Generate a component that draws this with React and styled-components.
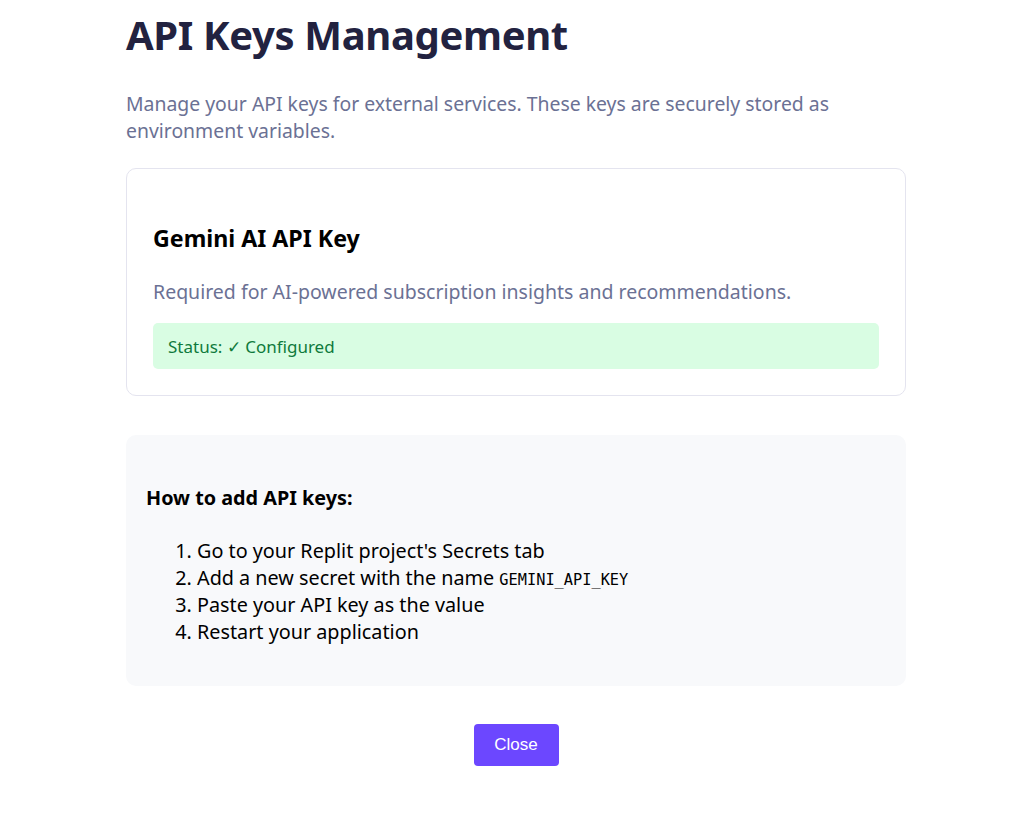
import React from 'react';
import styled, { createGlobalStyle } from 'styled-components';

const GlobalStyle = createGlobalStyle`
  body {
    margin: 0;
    background: #fff;
    font-family: "Noto Sans", "Open Sans", sans-serif;
  }
`;

const Shell = styled.div`
  padding-left: 10px;
`;

const Page = styled.main`
  width: 780px;
  margin: 0 auto;
  padding: 7px 0 68px;
  box-sizing: border-box;
`;

const Title = styled.h1`
  margin: 0;
  font-size: 40px;
  line-height: 56px;
  font-weight: 700;
  color: #222240;
  letter-spacing: -0.35px;
`;

const Subtitle = styled.p`
  margin: 27px 0 24px;
  font-size: 19.4px;
  line-height: 27px;
  color: #6b7194;
`;

const KeyCard = styled.section`
  border: 1px solid #e4e4ef;
  border-radius: 10px;
  padding: 24px 26px 26px;
`;

const KeyTitle = styled.h3`
  margin: 30px 0 25px;
  font-size: 23.2px;
  line-height: 30px;
  font-weight: 700;
  color: #000;
`;

const KeyText = styled.p`
  margin: 0 0 17px;
  font-size: 19.5px;
  line-height: 28px;
  color: #6b7194;
`;

const Status = styled.div`
  background: #d9fde3;
  color: #0f7a3c;
  border-radius: 5px;
  padding: 0 15px;
  height: 46px;
  display: flex;
  align-items: center;
  font-size: 17px;
`;

const HelpBox = styled.section`
  margin-top: 39px;
  background: #f8f9fb;
  border-radius: 10px;
  padding: 20px 20px 41px;
`;

const HelpTitle = styled.h4`
  margin: 31px 0 27px;
  font-size: 19.8px;
  line-height: 24px;
  font-weight: 700;
  color: #000;
`;

const Steps = styled.ol`
  margin: 0;
  padding-left: 51px;
  font-size: 19.8px;
  line-height: 27px;
  color: #000;
`;

const Step = styled.li`
  height: 27px;
`;

const Code = styled.code`
  font-family: "DejaVu Sans Mono", "Liberation Mono", monospace;
  font-size: 15.3px;
  line-height: 1;
`;

const Footer = styled.div`
  display: flex;
  justify-content: center;
  margin-top: 38px;
`;

const CloseButton = styled.button`
  width: 85px;
  height: 42px;
  border: none;
  border-radius: 4px;
  background: #6c47ff;
  color: #fff;
  font-family: "Liberation Sans", Arial, sans-serif;
  font-size: 17px;
  cursor: pointer;
`;

export default function App() {
  return (
    <Shell>
      <GlobalStyle />
      <Page>
        <Title>API Keys Management</Title>
        <Subtitle>
          Manage your API keys for external services. These keys are securely stored as
          environment variables.
        </Subtitle>
        <KeyCard>
          <KeyTitle>Gemini AI API Key</KeyTitle>
          <KeyText>Required for AI-powered subscription insights and recommendations.</KeyText>
          <Status>Status: ✓ Configured</Status>
        </KeyCard>
        <HelpBox>
          <HelpTitle>How to add API keys:</HelpTitle>
          <Steps>
            <Step>Go to your Replit project's Secrets tab</Step>
            <Step>
              Add a new secret with the name <Code>GEMINI_API_KEY</Code>
            </Step>
            <Step>Paste your API key as the value</Step>
            <Step>Restart your application</Step>
          </Steps>
        </HelpBox>
        <Footer>
          <CloseButton>Close</CloseButton>
        </Footer>
      </Page>
    </Shell>
  );
}
